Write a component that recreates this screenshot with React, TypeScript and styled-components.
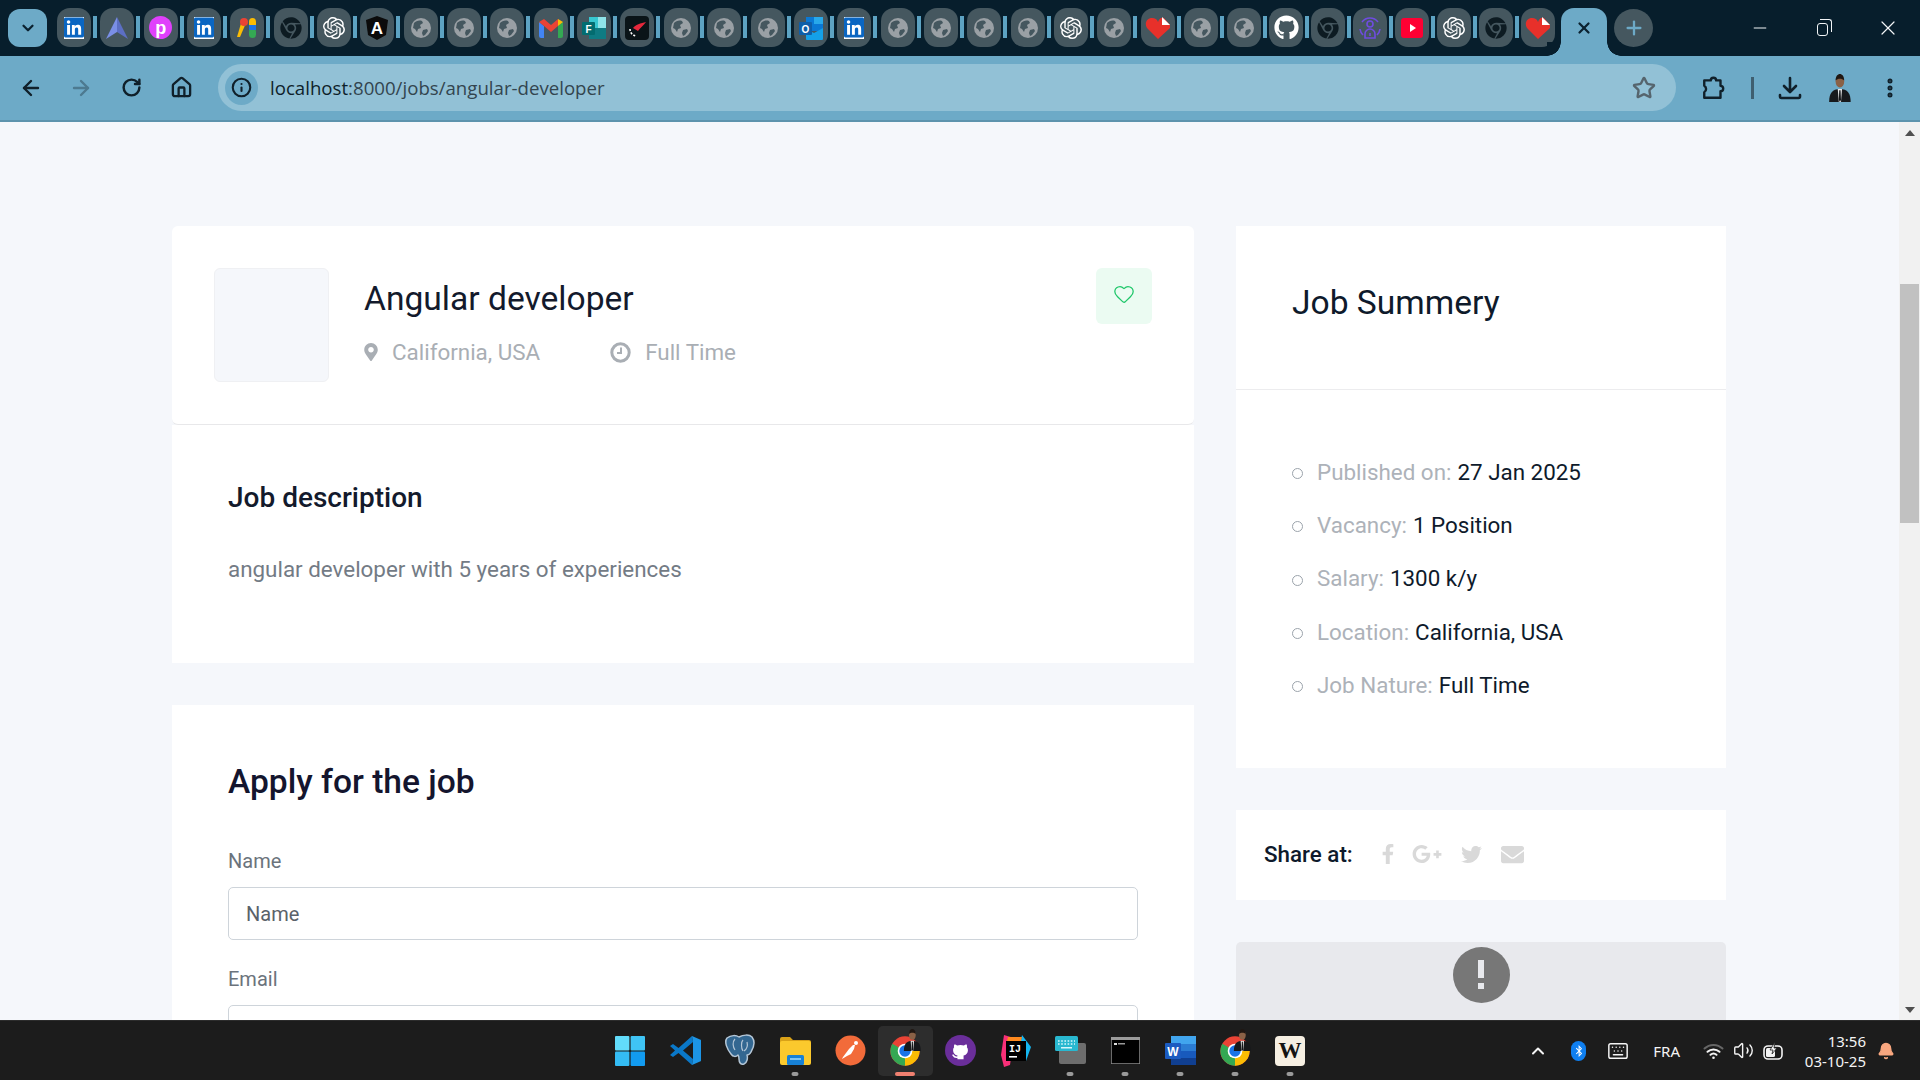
import React from "react";
import styled, { createGlobalStyle } from "styled-components";
import {
  ArrowLeft,
  ArrowRight,
  RotateCw,
  House,
  Info,
  Star,
  EllipsisVertical,
  X,
  Plus,
  Minus,
  ChevronDown,
  ChevronUp,
  Volume2,
  Keyboard,
  Bell,
  Heart,
} from "lucide-react";
import {
  FaLinkedin,
  FaGithub,
  FaChrome,
  FaFacebookF,
  FaGooglePlusG,
  FaTwitter,
  FaEnvelope,
  FaMapMarkerAlt,
  FaBluetoothB,
} from "react-icons/fa";
import { SiOpenai } from "react-icons/si";

const GlobalStyle = createGlobalStyle`
  html, body {
    margin: 0;
    height: 100%;
    overflow: hidden;
  }
  * {
    box-sizing: border-box;
  }
`;

const Screen = styled.div`
  width: 1920px;
  height: 1080px;
  display: flex;
  flex-direction: column;
  overflow: hidden;
  font-family: Roboto, "Liberation Sans", sans-serif;
  background: #f5f7fb;
`;

/* ---------- browser chrome ---------- */

const TabStrip = styled.div`
  height: 56px;
  flex: none;
  display: flex;
  align-items: flex-start;
  padding: 8px 0 0 8px;
  background: #071e2c;
`;

const TabSearch = styled.div`
  width: 39px;
  height: 38px;
  margin: 1px 10px 0 0;
  border-radius: 12px;
  background: #6daac7;
  color: #0b2230;
  display: flex;
  align-items: center;
  justify-content: center;
`;

const PinnedTab = styled.div`
  width: 34px;
  height: 39px;
  border-radius: 13px;
  background: #45575f;
  display: flex;
  align-items: center;
  justify-content: center;
  flex: none;
`;

const TabSep = styled.div<{ $tight?: boolean }>`
  width: 4px;
  height: 22px;
  margin: 8px ${(p) => (p.$tight ? "2px" : "3.35px")} 0 2px;
  background: #5da3c3;
  flex: none;
`;

const ActiveTab = styled.div`
  position: relative;
  width: 46px;
  height: 48px;
  margin-left: 6px;
  border-radius: 13px 13px 0 0;
  background: #6daac7;
  color: #0b2230;
  display: flex;
  align-items: center;
  justify-content: center;
  padding-bottom: 9px;
  flex: none;

  &::before,
  &::after {
    content: "";
    position: absolute;
    bottom: 0;
    width: 14px;
    height: 14px;
  }
  &::before {
    left: -14px;
    background: radial-gradient(circle at 0 0, #071e2c 13.5px, #6daac7 14px);
  }
  &::after {
    right: -14px;
    background: radial-gradient(circle at 100% 0, #071e2c 13.5px, #6daac7 14px);
  }
`;

const NewTab = styled.div`
  width: 39px;
  height: 38px;
  margin: 1px 0 0 7px;
  border-radius: 50%;
  background: #45575f;
  color: #6daac7;
  display: flex;
  align-items: center;
  justify-content: center;
`;

const WindowControls = styled.div`
  margin: -8px 0 0 auto;
  display: flex;
  color: #f2f5f7;
`;

const WindowButton = styled.div`
  width: 64px;
  height: 56px;
  display: flex;
  align-items: center;
  justify-content: center;
`;

const RestoreIcon = styled.div`
  position: relative;
  width: 11px;
  height: 13px;
  margin: 2px 4px 0 0;
  border: 1.2px solid #f2f5f7;
  border-radius: 3px;

  &::after {
    content: "";
    position: absolute;
    top: -5px;
    right: -5px;
    width: 11px;
    height: 12px;
    border-top: 1.2px solid #f2f5f7;
    border-right: 1.2px solid #f2f5f7;
    border-radius: 0 3px 0 0;
  }
`;

const Toolbar = styled.div`
  height: 66px;
  flex: none;
  display: flex;
  align-items: flex-start;
  padding: 8px 5px 0 6px;
  background: #6daac7;
  border-bottom: 2px solid #5d93ad;
`;

const ToolButton = styled.div<{ $muted?: boolean }>`
  width: 50px;
  height: 47px;
  flex: none;
  display: flex;
  align-items: center;
  justify-content: center;
  color: ${(p) => (p.$muted ? "#4d7a90" : "#10202a")};
`;

const Omnibox = styled.div`
  flex: 1;
  height: 47px;
  margin: 0 13px 0 12px;
  border-radius: 24px;
  background: #92c1d6;
  display: flex;
  align-items: center;
  padding: 0 20px 0 7px;
`;

const InfoChip = styled.div`
  width: 33px;
  height: 34px;
  border-radius: 50%;
  background: #6daac7;
  color: #10202a;
  display: flex;
  align-items: center;
  justify-content: center;
  margin-right: 12px;
`;

const UrlText = styled.span`
  flex: 1;
  font-family: "Open Sans", "Noto Sans", sans-serif;
  font-size: 18.65px;
  color: #33454f;

  b {
    font-weight: 400;
    color: #0e1f2b;
  }
`;

const ToolDivider = styled.div`
  width: 3px;
  height: 22px;
  margin: 13px 11px 0 12px;
  background: #3f5f70;
  flex: none;
`;

/* ---------- page ---------- */

const Middle = styled.div`
  flex: 1;
  min-height: 0;
  display: flex;
`;

const Viewport = styled.main`
  flex: 1;
  min-width: 0;
  overflow: hidden;
  padding: 104px 0 0 172px;
  display: grid;
  grid-template-columns: 1022px 490px;
  column-gap: 42px;
  align-items: start;
`;

const Column = styled.div`
  display: flex;
  flex-direction: column;
  gap: 42px;
`;

const Group = styled.div`
  display: flex;
  flex-direction: column;
`;

const HeadCard = styled.section`
  display: flex;
  align-items: flex-start;
  padding: 42px;
  background: #fff;
  border-radius: 6px;
  border-bottom: 1px solid #e8e8ea;
`;

const LogoBox = styled.div`
  width: 115px;
  height: 114px;
  flex: none;
  border: 1px solid #eff0f3;
  border-radius: 6px;
  background: #f5f7fb;
  margin-right: 35px;
`;

const JobTitle = styled.h1`
  margin: 12px 0 0;
  font-size: 33.6px;
  line-height: 38px;
  font-weight: 400;
  color: #131a2c;
`;

const MetaRow = styled.div`
  display: flex;
  margin-top: 19px;
  color: #a9aeb4;
  font-size: 22.4px;
  line-height: 30px;
`;

const MetaItem = styled.span<{ $gap: number }>`
  display: flex;
  align-items: center;
  gap: ${(p) => p.$gap}px;
  margin-right: 70px;

  &:first-child {
    margin-left: -2px;
  }
`;

const FavButton = styled.div`
  width: 56px;
  height: 56px;
  margin-left: auto;
  border-radius: 6px;
  background: #ebfbf2;
  color: #1fc76a;
  display: flex;
  align-items: center;
  justify-content: center;
  padding-bottom: 4px;
`;

const DescCard = styled.section`
  padding: 56px 56px 79px;
  background: #fff;
`;

const SectionTitle = styled.h2`
  margin: 0;
  font-size: 28px;
  line-height: 33px;
  font-weight: 500;
  color: #131a2c;
`;

const DescText = styled.p`
  margin: 41px 0 0;
  font-size: 22.4px;
  line-height: 29px;
  color: #737b85;
`;

const ApplyCard = styled.section`
  padding: 56px 56px 60px;
  background: #fff;
`;

const ApplyTitle = styled.h2`
  margin: 1px 0 47px;
  font-size: 33.6px;
  line-height: 40px;
  font-weight: 500;
  color: #14152e;
`;

const FieldLabel = styled.label`
  display: block;
  margin: 27px 0 14px;
  font-size: 20px;
  line-height: 24px;
  color: #6b737c;
`;

const TextInput = styled.input`
  display: block;
  width: 100%;
  height: 53px;
  padding: 0 17px;
  border: 1px solid #ced4da;
  border-radius: 5px;
  background: #fff;
  font-family: inherit;
  font-size: 20px;

  &::placeholder {
    color: #5a626a;
    opacity: 1;
  }
`;

const SummaryCard = styled.section`
  background: #fff;
`;

const SummaryHead = styled.div`
  height: 164px;
  padding: 57px 56px 0;
  border-bottom: 1px solid #ececee;
  font-size: 33.6px;
  line-height: 40px;
  color: #0e1a2b;
`;

const SummaryList = styled.ul`
  margin: 0;
  padding: 55px 56px 57px;
  list-style: none;
`;

const SummaryRow = styled.li`
  height: 53.3px;
  display: flex;
  align-items: center;
  font-size: 22.4px;
  color: #0e1a2b;
`;

const Bullet = styled.span`
  width: 11px;
  height: 11px;
  margin: 4px 14px 0 0;
  border: 1px solid #9ba3ab;
  border-radius: 50%;
  flex: none;
`;

const SummaryKey = styled.span`
  color: #adb2b9;
  margin-right: 6px;
`;

const ShareCard = styled.section`
  height: 90px;
  padding: 0 28px 2px;
  display: flex;
  align-items: center;
  background: #fff;
  font-size: 22.4px;
  font-weight: 500;
  color: #0e1a2b;
`;

const ShareIcons = styled.div`
  display: flex;
  align-items: center;
  gap: 19px;
  margin-left: 25px;
  color: #d9d9d9;

  svg:nth-child(2) {
    margin-left: -5px;
  }
`;

const MapCard = styled.div`
  height: 200px;
  padding-top: 5px;
  display: flex;
  justify-content: center;
  background: #e8e9ed;
  border-radius: 5px 5px 0 0;
`;

const ErrorBadge = styled.div`
  width: 57px;
  height: 56px;
  border-radius: 50%;
  background: #777;
  display: flex;
  align-items: center;
  justify-content: center;
`;

const ScrollTrack = styled.div`
  width: 21px;
  flex: none;
  display: flex;
  flex-direction: column;
  align-items: center;
  background: #f1f1f1;
`;

const ScrollArrow = styled.div<{ $down?: boolean }>`
  height: 21px;
  flex: none;
  display: flex;
  align-items: center;
  justify-content: center;
  margin-top: ${(p) => (p.$down ? "auto" : "0")};

  &::after {
    content: "";
    border-left: 5px solid transparent;
    border-right: 5px solid transparent;
    ${(p) => (p.$down ? "border-top" : "border-bottom")}: 6px solid #505050;
  }
`;

const ScrollThumb = styled.div`
  width: 19px;
  height: 239px;
  margin-top: 141px;
  background: #c1c1c1;
`;

/* ---------- taskbar ---------- */

const Taskbar = styled.footer`
  height: 60px;
  flex: none;
  display: grid;
  grid-template-columns: 1fr auto 1fr;
  align-items: center;
  background: #1c1c1c;
  border-top: 1px solid #2c2c2c;
  color: #f4f4f4;
  font-family: "Noto Sans", "Open Sans", sans-serif;
`;

const TaskApps = styled.div`
  grid-column: 2;
  display: flex;
`;

const TaskSlot = styled.div<{ $active?: boolean }>`
  position: relative;
  width: 55px;
  height: 50px;
  display: flex;
  align-items: center;
  justify-content: center;
  border-radius: 5px;
  background: ${(p) => (p.$active ? "#2d2d2d" : "transparent")};
`;

const RunDot = styled.span<{ $active?: boolean }>`
  position: absolute;
  bottom: 0;
  left: 50%;
  transform: translateX(-50%);
  width: ${(p) => (p.$active ? 20 : 7)}px;
  height: 4px;
  border-radius: 2px;
  background: ${(p) => (p.$active ? "#f08070" : "#9a9a9a")};
`;

const AvatarBadge = styled.span`
  position: absolute;
  top: 3px;
  right: 11px;
  display: flex;
`;

const GithubDisc = styled.span`
  width: 31px;
  height: 31px;
  border-radius: 50%;
  background: #6a2e9a;
  display: flex;
  align-items: center;
  justify-content: center;
`;

const Tray = styled.div`
  display: flex;
  align-items: center;
  justify-self: end;
  height: 100%;
  padding-right: 25px;
`;

const TrayIcon = styled.span<{ $left: number }>`
  display: flex;
  margin-left: ${(p) => p.$left}px;
`;

const BluetoothPill = styled.span`
  width: 15px;
  height: 20px;
  margin-left: 23px;
  border-radius: 8px;
  background: #0f7ff0;
  color: #fff;
  display: flex;
  align-items: center;
  justify-content: center;
`;

const TrayText = styled.span`
  margin-left: 24px;
  font-size: 15px;
`;

const Clock = styled.div`
  margin-left: 13px;
  width: 70px;
  text-align: right;
  font-size: 15px;
  line-height: 20px;
`;

/* ---------- logos ---------- */

const LetterMark = styled.span<{ $bg: string; $fg: string; $size: number; $radius: string; $serif?: boolean }>`
  width: ${(p) => p.$size}px;
  height: ${(p) => p.$size}px;
  border-radius: ${(p) => p.$radius};
  background: ${(p) => p.$bg};
  color: ${(p) => p.$fg};
  display: flex;
  align-items: center;
  justify-content: center;
  font-family: ${(p) => (p.$serif ? '"Liberation Serif", serif' : '"Liberation Sans", sans-serif')};
  font-weight: 700;
  font-size: ${(p) => Math.round(p.$size * 0.78)}px;
  line-height: 1;
`;

const LinkedinMark = styled.span`
  width: 20px;
  height: 22px;
  background: #fff;
  color: #0a66c2;
  display: flex;
  align-items: center;
  justify-content: center;
`;

const Globe = () => (
  <svg width="22" height="22" viewBox="0 0 22 22">
    <circle cx="11" cy="11" r="10" fill="#9aa0a5" />
    <path d="M4 6c2-2 5-3 8-2l1 2-3 2 1 3-3 1-1 3-2-3-2-1z" fill="#45575f" />
    <path d="M13 13l4-1 1 2-3 4-2 1-1-3z" fill="#45575f" />
  </svg>
);

const ChromeLogo = ({ size }: { size: number }) => (
  <svg width={size} height={size} viewBox="0 0 48 48">
    <circle cx="24" cy="24" r="22" fill="#ea4335" />
    <path d="M24 24L4.95 13A22 22 0 0 0 24 46z" fill="#34a853" />
    <path d="M24 24L43.05 13A22 22 0 0 1 24 46z" fill="#fbbc04" />
    <circle cx="24" cy="24" r="11" fill="#fff" />
    <circle cx="24" cy="24" r="8.5" fill="#1a73e8" />
  </svg>
);

const Avatar = ({ size }: { size: number }) => (
  <svg width={size * 0.85} height={size} viewBox="0 0 22 26">
    <path d="M1 26c0-8 3-12 10-12s10 4 10 12z" fill="#17191c" />
    <path d="M9 14h4l-1 12h-2z" fill="#e8e8e8" />
    <path d="M10.4 15h1.2l.4 9-1 2-1-2z" fill="#14161a" />
    <ellipse cx="11" cy="7" rx="4" ry="5.6" fill="#8a6146" />
    <path d="M7 6c0-4 2-6 4-6s4 2 4 6c-2-2-6-2-8 0z" fill="#201712" />
  </svg>
);

const ExtensionIcon = () => (
  <svg width="26" height="26" viewBox="0 0 24 24" fill="none" stroke="currentColor" strokeWidth="2.2" strokeLinejoin="round">
    <path d="M3 5h6a2.500 2.500 0 0 1 5 0h4v5a2.500 2.500 0 0 1 0 5v6H3v-5a3.500 3.500 0 0 0 0-6z" />
  </svg>
);

const DownloadIcon = () => (
  <svg width="26" height="26" viewBox="0 0 26 26" fill="none" stroke="currentColor" strokeWidth="2.6" strokeLinecap="round" strokeLinejoin="round">
    <path d="M13 3v13M7 11l6 6 6-6" />
    <path d="M3 20v1.500a1.500 1.500 0 0 0 1.500 1.500h17a1.500 1.500 0 0 0 1.500-1.500V20" />
  </svg>
);

const ClockIcon = () => (
  <svg width="21" height="21" viewBox="0 0 21 21" fill="none" stroke="currentColor">
    <circle cx="10.500" cy="10.500" r="8.700" strokeWidth="3" />
    <path d="M11 5.500v5.500H7" strokeWidth="2" />
  </svg>
);

const WifiIcon = () => (
  <svg width="21" height="18" viewBox="0 0 21 18" fill="none" strokeWidth="2" strokeLinecap="round">
    <path d="M1.500 6.500a13 13 0 0 1 18 0" stroke="#666" />
    <path d="M4.500 9.800a9 9 0 0 1 12 0" stroke="#f4f4f4" />
    <path d="M7.500 12.800a4.600 4.600 0 0 1 6 0" stroke="#f4f4f4" />
    <circle cx="10.500" cy="15.800" r="1.300" fill="#f4f4f4" stroke="none" />
  </svg>
);

const BatteryIcon = () => (
  <svg width="20" height="18" viewBox="0 0 20 18">
    <rect x="1" y="4" width="18" height="13" rx="4" fill="none" stroke="#f4f4f4" strokeWidth="1.6" />
    <rect x="3" y="6" width="9" height="9" rx="1.500" fill="#f4f4f4" />
    <path d="M12 0L7 8h3l-1 4 5-6h-3z" fill="#f4f4f4" stroke="#1c1c1c" strokeWidth="0.8" />
  </svg>
);

const Octocat = () => (
  <svg width="21" height="22" viewBox="0 0 24 25" fill="#fff">
    <path d="M8.500 22v-4.500c-2.800-.5-5-2.500-5-6 0-1.300.4-2.400 1.200-3.300-.2-.6-.3-1.800.2-3.200 1.300 0 2.500.7 3.400 1.300a11 11 0 0 1 7.400 0c.9-.6 2.100-1.300 3.400-1.300.5 1.400.4 2.600.2 3.200.8.900 1.200 2 1.200 3.300 0 3.500-2.200 5.500-5 6V22z" />
    <path d="M8.500 19.500c-2.500.6-3.800-.3-5-2.300" fill="none" stroke="#fff" strokeWidth="1.800" strokeLinecap="round" />
  </svg>
);

const Favicon = ({ kind }: { kind: string }) => {
  switch (kind) {
    case "in":
      return (
        <LinkedinMark>
          <FaLinkedin size={23} />
        </LinkedinMark>
      );
    case "arrow":
      return (
        <svg width="24" height="24" viewBox="0 0 24 24">
          <path d="M12 1L1 23l11-7z" fill="#7a8fe6" />
          <path d="M12 1l11 22-11-7z" fill="#5c6fc4" />
        </svg>
      );
    case "p":
      return <LetterMark $bg="#e040fb" $fg="#fff" $size={23} $radius="50%">p</LetterMark>;
    case "ads":
      return (
        <svg width="22" height="22" viewBox="0 0 22 22">
          <path d="M6 3l4 3-6 14H1z" fill="#fbbc04" />
          <circle cx="8" cy="5" r="4" fill="#ea4335" />
          <rect x="13" y="1" width="7" height="12" rx="3.5" fill="#fbbc04" />
          <rect x="13" y="11" width="7" height="10" rx="3.5" fill="#34a853" />
          <rect x="13" y="8" width="7" height="5" fill="#1a73e8" />
        </svg>
      );
    case "chrome":
      return <FaChrome size={22} color="#0d1b22" />;
    case "openai":
      return <SiOpenai size={22} color="#fff" />;
    case "angular":
      return (
        <svg width="22" height="24" viewBox="0 0 22 24">
          <path d="M11 0l11 4-2 15-9 5-9-5L0 4z" fill="#0b0b0b" />
          <text x="11" y="18" textAnchor="middle" fill="#fff" fontSize="17" fontWeight="700" fontFamily="Liberation Sans">A</text>
        </svg>
      );
    case "gmail":
      return (
        <svg width="24" height="20" viewBox="0 0 24 20">
          <path d="M0 4v14a2 2 0 0 0 2 2h3V8z" fill="#4285f4" />
          <path d="M24 4v14a2 2 0 0 1-2 2h-3V8z" fill="#34a853" />
          <path d="M0 4l5-3 7 6 7-6v7l-7 6-7-6-5-4z" fill="#ea4335" />
          <path d="M19 1l5 3-5 4z" fill="#fbbc04" />
        </svg>
      );
    case "forms":
      return (
        <svg width="26" height="26" viewBox="0 0 26 26">
          <rect x="8" y="2" width="9" height="11" fill="#37c6d0" />
          <rect x="17" y="2" width="8" height="11" fill="#8fe3e8" />
          <rect x="8" y="13" width="17" height="11" fill="#0f7b83" />
          <rect x="1" y="7" width="13" height="13" rx="1" fill="#036c70" />
          <text x="7.5" y="17.5" textAnchor="middle" fill="#fff" fontSize="10" fontWeight="700" fontFamily="Liberation Sans">F</text>
        </svg>
      );
    case "dark":
      return (
        <svg width="24" height="24" viewBox="0 0 24 24">
          <rect width="24" height="24" rx="4" fill="#0a1418" />
          <path d="M8 12c2-3 8-5 13-6-2 3-6 6-8 9z" fill="#e5283c" />
          <path d="M5 13a7 7 0 0 0 6 7" stroke="#fff" strokeWidth="1.6" strokeDasharray="2 1.5" fill="none" />
        </svg>
      );
    case "outlook":
      return (
        <svg width="24" height="26" viewBox="0 0 24 26">
          <rect x="7" y="2" width="17" height="14" fill="#0a78d4" />
          <rect x="15" y="2" width="9" height="7" fill="#28a8ea" />
          <path d="M7 14l8 4 9-5v11a1 1 0 0 1-1 1H8a1 1 0 0 1-1-1z" fill="#14a0e8" />
          <rect y="7" width="13" height="13" rx="1" fill="#0f5ea8" />
          <text x="6.5" y="17.5" textAnchor="middle" fill="#fff" fontSize="10" fontWeight="700" fontFamily="Liberation Sans">O</text>
        </svg>
      );
    case "heart":
      return (
        <svg width="26" height="26" viewBox="0 0 26 26">
          <path d="M13 24L2 13C-1 8 2 3 7 3c3 0 5 1 6 4 1-3 3-5 6-4l6 7v3z" fill="#e8302a" />
          <path d="M17 2l8 8h-8z" fill="#fff" />
        </svg>
      );
    case "github":
      return <FaGithub size={25} color="#fff" />;
    case "purple":
      return (
        <svg width="26" height="26" viewBox="0 0 26 26" fill="none" stroke="#6f4ce0" strokeWidth="1.6">
          <circle cx="13" cy="9" r="3" />
          <path d="M8 23v-4a5 5 0 0 1 10 0v4z" />
          <path d="M13 18v3" />
          <path d="M5 7a10 10 0 0 1 16 0M3 14a10 10 0 0 0 3 6M23 14a10 10 0 0 1-3 6" />
        </svg>
      );
    case "youtube":
      return (
        <svg width="22" height="20" viewBox="0 0 22 20">
          <rect width="22" height="20" rx="3" fill="#ff0033" />
          <path d="M9 6l6 4-6 4z" fill="#fff" />
        </svg>
      );
    default:
      return <Globe />;
  }
};

const TaskIcon = ({ kind }: { kind: string }) => {
  switch (kind) {
    case "windows":
      return (
        <svg width="30" height="30" viewBox="0 0 30 30">
          <rect width="14.4" height="14.4" y="0" x="0" rx="1" fill="#62dcfa" />
          <rect width="14.4" height="14.4" y="0" x="15.6" rx="1" fill="#3fc4f5" />
          <rect width="14.4" height="14.4" y="15.6" x="0" rx="1" fill="#34bcf4" />
          <rect width="14.4" height="14.4" y="15.6" x="15.6" rx="1" fill="#129bf0" />
        </svg>
      );
    case "vscode":
      return (
        <svg width="31" height="31" viewBox="0 0 31 31">
          <path d="M22 1L8.500 13 3 9 0 11l5 4.500-5 4.500 3 2 5.500-4L22 30l1-6-10-8.500 10-8.500z" fill="#0a78c8" />
          <path d="M22 1l8 3.500a1 1 0 0 1 1 1v20a1 1 0 0 1-1 1L22 30l1-6V7z" fill="#1c95e6" />
        </svg>
      );
    case "postgres":
      return (
        <svg width="32" height="33" viewBox="0 0 32 33">
          <path
            d="M3 4c4-3 9-3 12-1 4-2 10-3 13 0 3 4 2 10-1 15-1 2-2 3-4 3 1 3 0 8-3 9-3 1-5-1-5-5 0-2 0-3-1-4-2 2-5 2-7-1C3 15 0 8 3 4z"
            fill="#336791"
            stroke="#b4c6d6"
            strokeWidth="1.5"
            strokeLinejoin="round"
          />
          <path d="M11 5c-3 3-2 8 0 11M19 6c-2 2-2 8 0 11M23 8c1 4 0 7-3 9" fill="none" stroke="#b4c6d6" strokeWidth="1.2" />
        </svg>
      );
    case "folder":
      return (
        <svg width="31" height="29" viewBox="0 0 31 29">
          <path d="M0 3a2 2 0 0 1 2-2h8l3 3h16a2 2 0 0 1 2 2v3H0z" fill="#d9a218" />
          <rect y="5" width="31" height="24" rx="2" fill="#fbc92d" />
          <rect x="7" y="19" width="17" height="10" rx="1.500" fill="#1781d6" />
          <rect x="10" y="22" width="11" height="2" fill="#7cc4f5" />
        </svg>
      );
    case "postman":
      return (
        <svg width="31" height="31" viewBox="0 0 31 31">
          <circle cx="15.500" cy="15.500" r="15" fill="#f26b3a" />
          <path d="M7 24l5-3 4-2 3-5 1-4-2 0-4 4-3 4-3 4z" fill="#fff" />
          <circle cx="21" cy="8" r="2" fill="#fff" />
        </svg>
      );
    case "chrome":
      return <ChromeLogo size={32} />;
    case "github":
      return (
        <GithubDisc>
          <Octocat />
        </GithubDisc>
      );
    case "idea":
      return (
        <svg width="31" height="32" viewBox="0 0 31 32">
          <path d="M4 0l10 3-4 27-6 2-3-12z" fill="#f92f78" />
          <path d="M22 0l9 12-5 14-8-6z" fill="#14b6f0" />
          <path d="M8 2h14l-2 8H6z" fill="#ff8a1f" />
          <rect x="6" y="6" width="20" height="20" fill="#000" />
          <text x="15" y="17" textAnchor="middle" fill="#fff" fontSize="10" fontWeight="700" fontFamily="Liberation Mono">IJ</text>
          <rect x="9" y="21" width="8" height="1.600" fill="#fff" />
        </svg>
      );
    case "keyboard":
      return (
        <svg width="31" height="30" viewBox="0 0 31 30">
          <rect x="4" y="7" width="27" height="21" rx="2" fill="#6d6d6d" />
          <rect y="0" width="23" height="15" rx="1.500" fill="#29b8d0" />
          <path d="M3 5h17M3 8h17" stroke="#d8f6fb" strokeWidth="1.4" strokeDasharray="1.6 1.6" />
          <rect x="6" y="11" width="11" height="1.500" fill="#d8f6fb" />
        </svg>
      );
    case "terminal":
      return (
        <svg width="29" height="27" viewBox="0 0 29 27">
          <rect width="29" height="27" fill="#000" stroke="#8d8d8d" strokeWidth="1.5" />
          <rect width="29" height="3" fill="#9b9b9b" />
          <rect x="3" y="6" width="3" height="2" fill="#ddd" />
          <rect x="7" y="6" width="7" height="1.500" fill="#999" />
        </svg>
      );
    case "word":
      return (
        <svg width="31" height="29" viewBox="0 0 31 29">
          <rect x="6" y="0" width="25" height="8" fill="#41a5ee" />
          <rect x="6" y="8" width="25" height="7" fill="#2b7cd3" />
          <rect x="6" y="15" width="25" height="7" fill="#185abd" />
          <rect x="6" y="22" width="25" height="7" fill="#103f91" />
          <rect y="7" width="16" height="16" rx="1" fill="#1b5bc0" />
          <text x="8" y="20" textAnchor="middle" fill="#fff" fontSize="12" fontWeight="700" fontFamily="Liberation Sans">W</text>
        </svg>
      );
    case "wmark":
      return <LetterMark $bg="#f6efe2" $fg="#141414" $size={30} $radius="4px" $serif>W</LetterMark>;
    default:
      return null;
  }
};

/* ---------- data ---------- */

const tabs = [
  "in", "arrow", "p", "in", "ads", "chrome", "openai", "angular",
  "globe", "globe", "globe", "gmail", "forms", "dark",
  "globe", "globe", "globe", "outlook", "in",
  "globe", "globe", "globe", "globe", "openai", "globe", "heart",
  "globe", "globe", "github", "chrome", "purple", "youtube",
  "openai", "chrome", "heart",
];

const taskApps = [
  { kind: "windows" },
  { kind: "vscode" },
  { kind: "postgres" },
  { kind: "folder", running: true },
  { kind: "postman" },
  { kind: "chrome", active: true, avatar: true },
  { kind: "github" },
  { kind: "idea" },
  { kind: "keyboard", running: true },
  { kind: "terminal", running: true },
  { kind: "word", running: true },
  { kind: "chrome", running: true, avatar: true },
  { kind: "wmark", running: true },
];

const summary = [
  ["Published on:", "27 Jan 2025"],
  ["Vacancy:", "1 Position"],
  ["Salary:", "1300 k/y"],
  ["Location:", "California, USA"],
  ["Job Nature:", "Full Time"],
];

export default function App() {
  return (
    <Screen>
      <GlobalStyle />

      <TabStrip>
        <TabSearch>
          <ChevronDown size={18} strokeWidth={3} />
        </TabSearch>
        {tabs.map((kind, i) => (
          <React.Fragment key={i}>
            <PinnedTab>
              <Favicon kind={kind} />
            </PinnedTab>
            {i < tabs.length - 1 && <TabSep $tight={i >= 27} />}
          </React.Fragment>
        ))}
        <ActiveTab>
          <X size={18} strokeWidth={3} />
        </ActiveTab>
        <NewTab>
          <Plus size={22} strokeWidth={2.5} />
        </NewTab>
        <WindowControls>
          <WindowButton>
            <Minus size={20} strokeWidth={1.2} />
          </WindowButton>
          <WindowButton>
            <RestoreIcon />
          </WindowButton>
          <WindowButton>
            <X size={24} strokeWidth={1.2} />
          </WindowButton>
        </WindowControls>
      </TabStrip>

      <Toolbar>
        <ToolButton>
          <ArrowLeft size={24} strokeWidth={2.4} />
        </ToolButton>
        <ToolButton $muted>
          <ArrowRight size={24} strokeWidth={2.4} />
        </ToolButton>
        <ToolButton>
          <RotateCw size={21} strokeWidth={2.8} />
        </ToolButton>
        <ToolButton>
          <House size={23} strokeWidth={2.4} />
        </ToolButton>
        <Omnibox>
          <InfoChip>
            <Info size={21} strokeWidth={2.4} />
          </InfoChip>
          <UrlText>
            <b>localhost</b>:8000/jobs/angular-developer
          </UrlText>
          <Star size={24} strokeWidth={2.4} color="#55646d" />
        </Omnibox>
        <ToolButton>
          <ExtensionIcon />
        </ToolButton>
        <ToolDivider />
        <ToolButton>
          <DownloadIcon />
        </ToolButton>
        <ToolButton>
          <Avatar size={28} />
        </ToolButton>
        <ToolButton>
          <EllipsisVertical size={24} strokeWidth={3} />
        </ToolButton>
      </Toolbar>

      <Middle>
        <Viewport>
          <Column>
            <Group>
              <HeadCard>
                <LogoBox />
                <div>
                  <JobTitle>Angular developer</JobTitle>
                  <MetaRow>
                    <MetaItem $gap={12}>
                      <FaMapMarkerAlt size={18} />
                      California, USA
                    </MetaItem>
                    <MetaItem $gap={14}>
                      <ClockIcon />
                      Full Time
                    </MetaItem>
                  </MetaRow>
                </div>
                <FavButton>
                  <Heart size={22} strokeWidth={1.4} />
                </FavButton>
              </HeadCard>
              <DescCard>
                <SectionTitle>Job description</SectionTitle>
                <DescText>angular developer with 5 years of experiences</DescText>
              </DescCard>
            </Group>

            <ApplyCard>
              <ApplyTitle>Apply for the job</ApplyTitle>
              <FieldLabel htmlFor="name">Name</FieldLabel>
              <TextInput id="name" placeholder="Name" />
              <FieldLabel htmlFor="email">Email</FieldLabel>
              <TextInput id="email" placeholder="Email" />
            </ApplyCard>
          </Column>

          <Column>
            <SummaryCard>
              <SummaryHead>Job Summery</SummaryHead>
              <SummaryList>
                {summary.map(([key, value]) => (
                  <SummaryRow key={key}>
                    <Bullet />
                    <SummaryKey>{key}</SummaryKey>
                    {value}
                  </SummaryRow>
                ))}
              </SummaryList>
            </SummaryCard>

            <ShareCard>
              Share at:
              <ShareIcons>
                <FaFacebookF size={20} />
                <FaGooglePlusG size={30} />
                <FaTwitter size={21} />
                <FaEnvelope size={23} />
              </ShareIcons>
            </ShareCard>

            <MapCard>
              <ErrorBadge>
                <svg width="8" height="30" viewBox="0 0 8 30">
                  <rect x="1" y="0" width="6" height="18" fill="#e8e9ed" />
                  <rect x="1" y="23" width="6" height="6" fill="#e8e9ed" />
                </svg>
              </ErrorBadge>
            </MapCard>
          </Column>
        </Viewport>

        <ScrollTrack>
          <ScrollArrow />
          <ScrollThumb />
          <ScrollArrow $down />
        </ScrollTrack>
      </Middle>

      <Taskbar>
        <TaskApps>
          {taskApps.map((app, i) => (
            <TaskSlot key={i} $active={app.active}>
              <TaskIcon kind={app.kind} />
              {app.avatar && (
                <AvatarBadge>
                  <Avatar size={22} />
                </AvatarBadge>
              )}
              {(app.running || app.active) && <RunDot $active={app.active} />}
            </TaskSlot>
          ))}
        </TaskApps>
        <Tray>
          <TrayIcon $left={0}>
            <ChevronUp size={20} strokeWidth={2.4} />
          </TrayIcon>
          <BluetoothPill>
            <FaBluetoothB size={12} />
          </BluetoothPill>
          <TrayIcon $left={21}>
            <Keyboard size={22} strokeWidth={1.6} />
          </TrayIcon>
          <TrayText>FRA</TrayText>
          <TrayIcon $left={23}>
            <WifiIcon />
          </TrayIcon>
          <TrayIcon $left={9}>
            <Volume2 size={21} strokeWidth={1.6} />
          </TrayIcon>
          <TrayIcon $left={9}>
            <BatteryIcon />
          </TrayIcon>
          <Clock>
            13:56
            <br />
            03-10-25
          </Clock>
          <TrayIcon $left={11}>
            <Bell size={18} fill="#f9a77f" color="#f9a77f" />
          </TrayIcon>
        </Tray>
      </Taskbar>
    </Screen>
  );
}
